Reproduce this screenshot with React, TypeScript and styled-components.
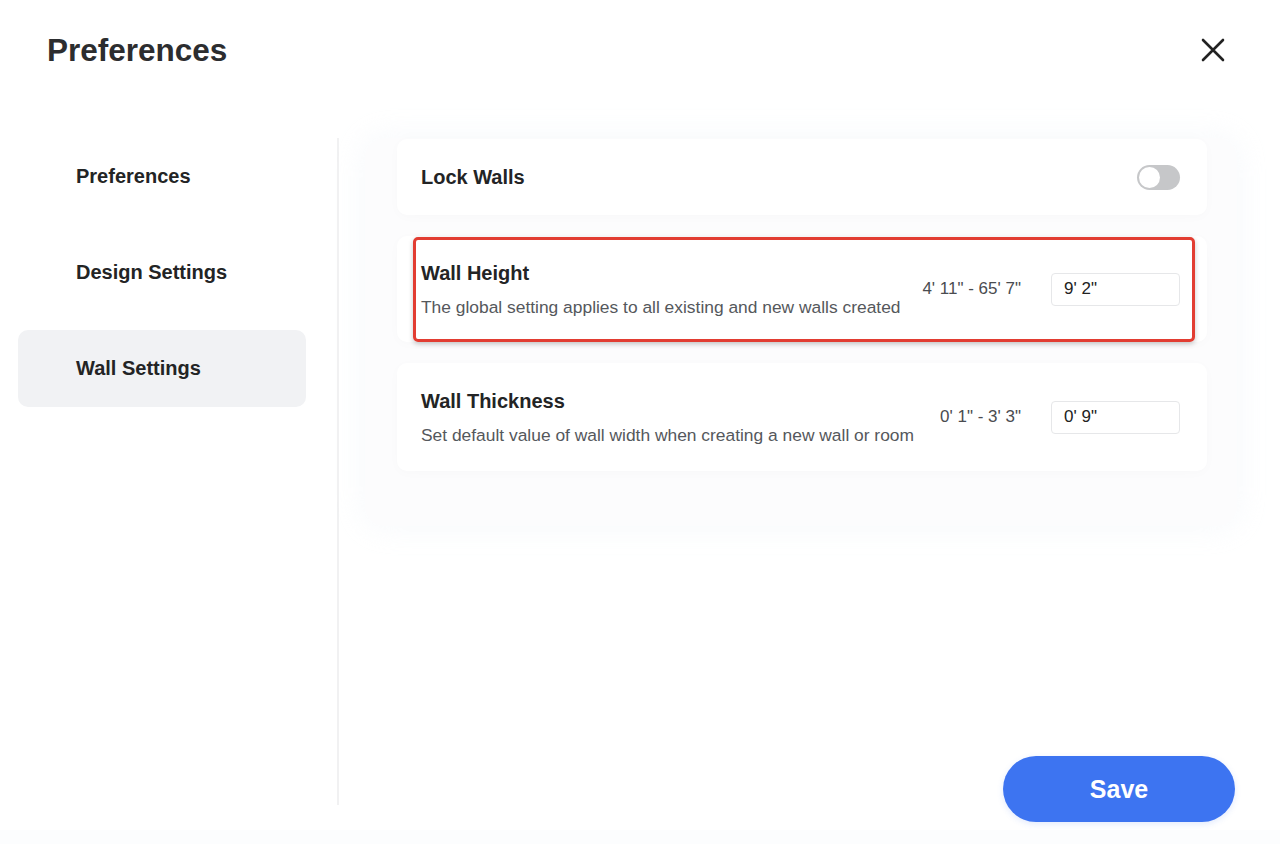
import { createGlobalStyle, styled } from "styled-components";

const GlobalStyle = createGlobalStyle`
  html, body {
    margin: 0;
    padding: 0;
    background: #ffffff;
  }
  * {
    box-sizing: border-box;
  }
  body {
    font-family: "Liberation Sans", Arial, Helvetica, sans-serif;
    color: #222;
  }
`;

const navItems = ["Preferences", "Design Settings", "Wall Settings"];

interface Setting {
  title: string;
  desc: string;
  range: string;
  value: string;
  highlighted?: boolean;
}

const settings: Setting[] = [
  {
    title: "Wall Height",
    desc: "The global setting applies to all existing and new walls created",
    range: `4' 11" - 65' 7"`,
    value: `9' 2"`,
    highlighted: true,
  },
  {
    title: "Wall Thickness",
    desc: "Set default value of wall width when creating a new wall or room",
    range: `0' 1" - 3' 3"`,
    value: `0' 9"`,
  },
];

const CloseIcon = () => (
  <svg width="24" height="24" viewBox="0 0 24 24" fill="none">
    <path
      d="M2 2L22 22M22 2L2 22"
      stroke="#222"
      strokeWidth="2.6"
      strokeLinecap="round"
    />
  </svg>
);

const App = () => {
  return (
    <>
      <GlobalStyle />
      <Page>
        <Header>
          <Title>Preferences</Title>
          <CloseButton aria-label="Close">
            <CloseIcon />
          </CloseButton>
        </Header>
        <Main>
          <Sidebar>
            {navItems.map((item) => (
              <NavItem key={item} $active={item === "Wall Settings"}>
                {item}
              </NavItem>
            ))}
          </Sidebar>
          <Content>
            <Panel>
              <Card $height={76}>
                <CardTitle>Lock Walls</CardTitle>
                <Toggle>
                  <Knob />
                </Toggle>
              </Card>
              {settings.map((s) => (
                <Card key={s.title} $height={s.highlighted ? 106 : 108}>
                  <TextBlock>
                    <CardTitle>{s.title}</CardTitle>
                    <CardDesc>{s.desc}</CardDesc>
                  </TextBlock>
                  <Controls>
                    <Range>{s.range}</Range>
                    <ValueInput defaultValue={s.value} />
                  </Controls>
                  {s.highlighted && <Highlight />}
                </Card>
              ))}
            </Panel>
            <Footer>
              <SaveButton>Save</SaveButton>
            </Footer>
          </Content>
        </Main>
      </Page>
    </>
  );
};

export default App;

const Page = styled.div`
  width: 1280px;
  height: 844px;
  display: flex;
  flex-direction: column;
  overflow: hidden;
  background: linear-gradient(to bottom, #fff 0, #fff 830px, #fcfdfe 830px);
`;

const Header = styled.header`
  height: 100px;
  flex-shrink: 0;
  display: flex;
  align-items: center;
  justify-content: space-between;
  padding: 0 55px 0 47px;
`;

const Title = styled.h1`
  margin: 0;
  font-size: 31.5px;
  font-weight: 700;
  color: #2c2d2f;
`;

const CloseButton = styled.button`
  border: 0;
  background: none;
  padding: 0;
  width: 24px;
  height: 24px;
  display: flex;
  cursor: pointer;
`;

const Main = styled.div`
  flex: 1;
  display: flex;
  padding-top: 38px;
`;

const Sidebar = styled.nav`
  width: 339px;
  height: 667px;
  flex-shrink: 0;
  display: flex;
  flex-direction: column;
  gap: 19px;
  padding: 0 31px 0 18px;
  border-right: 2px solid #f1f1f2;
`;

const NavItem = styled.div<{ $active?: boolean }>`
  height: 77px;
  display: flex;
  align-items: center;
  padding-left: 58px;
  border-radius: 10px;
  font-size: 20px;
  font-weight: 700;
  color: #232425;
  background: ${(p) => (p.$active ? "#f1f2f4" : "transparent")};
  cursor: pointer;
`;

const Content = styled.div`
  flex: 1;
  display: flex;
  flex-direction: column;
  justify-content: space-between;
  padding: 0 43px 22px 26px;
`;

const Panel = styled.section`
  display: flex;
  flex-direction: column;
  gap: 21px;
  padding: 1px 30px 55px 32px;
  border-radius: 20px;
  background: #fcfcfd;
  box-shadow: 0 0 28px 4px rgba(240, 243, 248, 0.45);
`;

const Card = styled.div<{ $height: number }>`
  position: relative;
  height: ${(p) => p.$height}px;
  display: flex;
  align-items: center;
  justify-content: space-between;
  padding: 0 27px 0 24px;
  background: #fff;
  border-radius: 10px;
  box-shadow: 0 2px 12px rgba(30, 40, 60, 0.02);
`;

const TextBlock = styled.div`
  display: flex;
  flex-direction: column;
  gap: 11px;
`;

const CardTitle = styled.div`
  font-size: 20px;
  font-weight: 700;
  line-height: 24px;
  color: #232425;
`;

const CardDesc = styled.div`
  font-size: 17.4px;
  line-height: 22px;
  color: #55585c;
`;

const Controls = styled.div`
  display: flex;
  align-items: center;
  gap: 30px;
`;

const Range = styled.span`
  font-size: 17px;
  color: #4a4c50;
  white-space: nowrap;
`;

const ValueInput = styled.input`
  width: 129px;
  height: 33px;
  padding: 0 12px;
  border: 1px solid #e6e7e9;
  border-radius: 4px;
  font-family: inherit;
  font-size: 17px;
  color: #222;
  background: #fff;
  outline: none;
`;

const Toggle = styled.div`
  width: 43px;
  height: 25px;
  border-radius: 13px;
  background: #c6c7c9;
  padding: 2px;
  display: flex;
  align-items: center;
`;

const Knob = styled.span`
  width: 21px;
  height: 21px;
  border-radius: 50%;
  background: #fff;
`;

const Highlight = styled.div`
  position: absolute;
  top: 1px;
  bottom: 0;
  left: 16px;
  right: 12px;
  border: 3px solid #e23d32;
  border-radius: 5px;
  box-shadow: 0 2px 5px rgba(0, 0, 0, 0.22);
  pointer-events: none;
`;

const Footer = styled.div`
  display: flex;
  justify-content: flex-end;
  padding-right: 2px;
`;

const SaveButton = styled.button`
  width: 232px;
  height: 66px;
  border: 0;
  border-radius: 33px;
  background: #3d74f1;
  color: #fff;
  font-family: inherit;
  font-size: 25px;
  font-weight: 700;
  cursor: pointer;
  box-shadow: 0 2px 6px rgba(61, 116, 241, 0.15);
`;
